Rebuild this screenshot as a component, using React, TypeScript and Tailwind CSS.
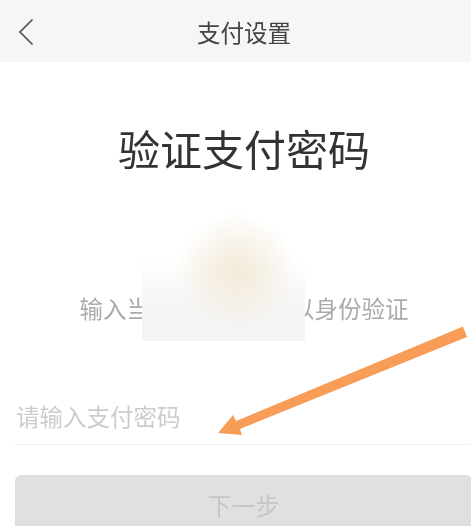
const cjk = "font-['Noto_Sans_CJK_SC','Noto_Sans',sans-serif]";

export default function App() {
  return (
    <div className={`relative h-[526px] w-[471px] overflow-hidden bg-white ${cjk}`}>
      {/* nav bar */}
      <div className="relative flex h-[62px] items-center justify-center bg-[#f6f6f6] pl-[17px] pt-[3px]">
        <svg
          className="absolute left-[17px] top-[17px]"
          width="18"
          height="30"
          viewBox="0 0 18 30"
          fill="none"
        >
          <path d="M15.5 2.5 L3 15 L15.5 27.5" stroke="#555555" strokeWidth="1.7" />
        </svg>
        <span className="text-[23.5px] leading-none text-[#444444] blur-[0.3px]">支付设置</span>
      </div>

      <h1 className="mt-[62px] pl-[17px] text-center text-[42px] font-normal leading-[48px] text-[#333333] blur-[0.3px]">
        验证支付密码
      </h1>

      <p className="mt-[121px] pl-[17px] text-center text-[23.5px] leading-[30px] text-[#aaaaaa] blur-[0.3px]">
        输入当前的支付密码以身份验证
      </p>

      {/* input */}
      <div className="ml-[14px] mt-[72px] flex h-[50px] items-start border-b border-[#f2f2f2] pl-[2px]">
        <span className="text-[23.5px] leading-[42px] text-[#cccccc] blur-[0.3px]">请输入支付密码</span>
      </div>

      <button className="ml-[15px] mt-[30px] flex h-[51px] w-[457px] items-center justify-center rounded-t-[6px] bg-[#e0e0e0] pt-[8px] text-[24px] leading-[36px] text-[#c6c6c6] blur-[0.2px]">
        下一步
      </button>

      {/* blurred patch over the subtitle */}
      <div className="absolute left-[142px] top-[212px] h-[129px] w-[163px] bg-[radial-gradient(ellipse_60px_58px_at_58%_46%,#f3ead8_0%,rgba(244,236,221,0.75)_40%,rgba(246,243,236,0)_100%),linear-gradient(to_bottom,#ffffff_35%,#f5f5f5_72%,#f4f4f4_100%)]" />

      {/* annotation arrow */}
      <svg className="absolute left-0 top-0" width="471" height="526" viewBox="0 0 471 526" fill="none">
        <path d="M463 326.5 L467 337 L240 429 L242 435 L218 433 L233 415 L236 421 Z" fill="#f79d58" />
      </svg>
    </div>
  );
}
